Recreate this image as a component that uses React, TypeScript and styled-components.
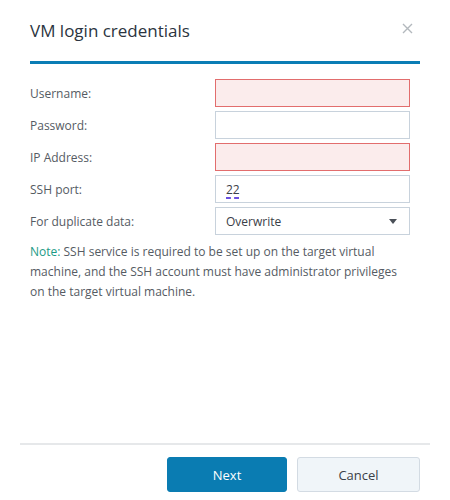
import React from "react";
import styled, { createGlobalStyle } from "styled-components";

const GlobalStyle = createGlobalStyle`
  body {
    margin: 0;
    background: #ffffff;
    font-family: "Open Sans", "Liberation Sans", sans-serif;
  }
`;

const Dialog = styled.div`
  width: 450px;
  height: 500px;
  display: flex;
  flex-direction: column;
  background: #ffffff;
`;

const Header = styled.div`
  margin: 0 30px;
  height: 61px;
  border-bottom: 3px solid #0b7db5;
  display: flex;
  align-items: flex-start;
  justify-content: space-between;
  box-sizing: content-box;
`;

const Title = styled.h1`
  margin: 20px 0 0 0;
  font-size: 17px;
  line-height: 22px;
  font-weight: 400;
  color: #2b3440;
`;

const CloseButton = styled.button`
  margin: 22px 7px 0 0;
  padding: 0;
  width: 12px;
  height: 12px;
  border: none;
  background: transparent;
  display: flex;
  align-items: center;
  justify-content: center;
  cursor: pointer;
`;

const Body = styled.div`
  flex: 1;
  padding: 15px 40px 0 30px;
`;

const Form = styled.div`
  display: grid;
  grid-template-columns: 185px 195px;
  row-gap: 4px;
  align-items: center;
`;

const Label = styled.label`
  font-size: 12px;
  color: #555b63;
`;

interface FieldProps {
  error?: boolean;
}

const Input = styled.input<FieldProps>`
  box-sizing: border-box;
  height: 28px;
  width: 195px;
  padding: 0 10px;
  font-family: inherit;
  font-size: 12px;
  color: #3a4048;
  border: 1px solid ${({ error }) => (error ? "#e26d6d" : "#c8d2dc")};
  background: ${({ error }) => (error ? "#fbecec" : "#ffffff")};
  outline: none;
`;

const PortBox = styled.div`
  box-sizing: border-box;
  height: 28px;
  width: 195px;
  padding: 0 10px;
  display: flex;
  align-items: center;
  font-size: 12px;
  color: #3a4048;
  border: 1px solid #c8d2dc;
`;

const Spelled = styled.span`
  text-decoration: underline dashed #6b4fe0 2px;
  text-underline-offset: 4px;
`;

const Select = styled.div`
  box-sizing: border-box;
  height: 28px;
  width: 195px;
  padding: 0 12px 0 10px;
  display: flex;
  align-items: center;
  justify-content: space-between;
  font-size: 12px;
  color: #3a4048;
  border: 1px solid #c8d2dc;
`;

const Caret = styled.span`
  width: 0;
  height: 0;
  margin-top: 1px;
  border-left: 4.5px solid transparent;
  border-right: 4.5px solid transparent;
  border-top: 5px solid #4a5058;
`;

const Note = styled.p`
  margin: 7px 0 0 0;
  font-size: 12px;
  line-height: 20px;
  color: #555b63;
`;

const NoteTag = styled.span`
  color: #1c9a86;
`;

const Footer = styled.div`
  margin: 0 20px 8px 20px;
  padding: 12px 10px 0 0;
  border-top: 2px solid #e6e8ea;
  display: flex;
  justify-content: flex-end;
  gap: 10px;
`;

interface ButtonProps {
  primary?: boolean;
}

const Button = styled.button<ButtonProps>`
  box-sizing: border-box;
  height: 35px;
  width: ${({ primary }) => (primary ? "120px" : "123px")};
  border-radius: 3px;
  font-family: inherit;
  font-size: 13px;
  cursor: pointer;
  border: 1px solid ${({ primary }) => (primary ? "#0a7cb2" : "#d3dbe3")};
  background: ${({ primary }) => (primary ? "#0a7cb2" : "#f0f5f9")};
  color: ${({ primary }) => (primary ? "#ffffff" : "#3a4048")};
`;

const App = () => {
  return (
    <Dialog>
      <GlobalStyle />
      <Header>
        <Title>VM login credentials</Title>
        <CloseButton aria-label="close">
          <svg width="11" height="11" viewBox="0 0 11 11">
            <path d="M1 1 L10 10 M10 1 L1 10" stroke="#b3b8bd" strokeWidth="1.4" />
          </svg>
        </CloseButton>
      </Header>
      <Body>
        <Form>
          <Label>Username:</Label>
          <Input error />
          <Label>Password:</Label>
          <Input type="password" />
          <Label>IP Address:</Label>
          <Input error />
          <Label>SSH port:</Label>
          <PortBox>
            <Spelled>22</Spelled>
          </PortBox>
          <Label>For duplicate data:</Label>
          <Select>
            Overwrite
            <Caret />
          </Select>
        </Form>
        <Note>
          <NoteTag>Note:</NoteTag> SSH service is required to be set up on the target virtual
          machine, and the SSH account must have administrator privileges on the target virtual
          machine.
        </Note>
      </Body>
      <Footer>
        <Button primary>Next</Button>
        <Button>Cancel</Button>
      </Footer>
    </Dialog>
  );
};

export default App;
